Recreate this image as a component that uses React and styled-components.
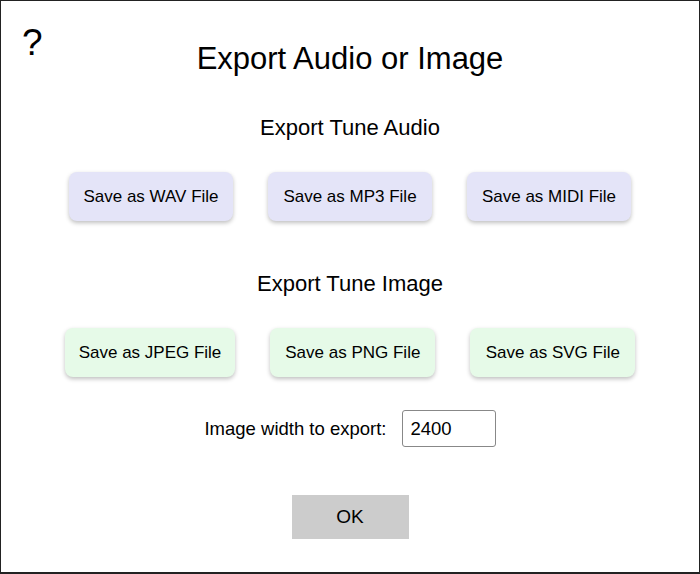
import React, { useState } from "react";
import styled, { createGlobalStyle } from "styled-components";

const GlobalStyle = createGlobalStyle`
  * {
    box-sizing: border-box;
  }
  body {
    margin: 0;
    padding: 0;
    background: #fff;
    font-family: "Liberation Sans", Arial, sans-serif;
  }
`;

const Dialog = styled.div`
  position: relative;
  width: 700px;
  height: 574px;
  border: 1px solid #222;
  border-bottom-width: 2px;
  background: #fff;
  display: flex;
  flex-direction: column;
  align-items: center;
  padding-top: 38px;
  color: #000;
`;

const HelpMark = styled.div`
  position: absolute;
  left: 21px;
  top: 23px;
  font-size: 37px;
  line-height: 1;
  cursor: pointer;
`;

const Title = styled.h1`
  margin: 0;
  font-size: 31px;
  font-weight: normal;
  line-height: 40px;
`;

const Section = styled.h2`
  margin: ${(p) => p.$top}px 0 0;
  font-size: 22px;
  font-weight: normal;
  line-height: 24px;
`;

const ButtonRow = styled.div`
  display: flex;
  justify-content: center;
  gap: 35px;
  margin-top: 32px;
`;

const SaveButton = styled.button`
  font-family: "Liberation Sans", Arial, sans-serif;
  font-size: 17px;
  color: #000;
  height: 49px;
  padding: 0 14px;
  min-width: ${(p) => p.$min}px;
  border: none;
  border-radius: 8px;
  background: ${(p) => (p.$kind === "audio" ? "#e4e4f8" : "#e6fae8")};
  box-shadow: 0 2px 4px rgba(0, 0, 0, 0.25);
  cursor: pointer;
`;

const WidthRow = styled.div`
  display: flex;
  align-items: center;
  gap: 15px;
  margin-top: 33px;
  font-size: 18.5px;
`;

const WidthInput = styled.input`
  width: 94px;
  height: 37px;
  border: 1px solid #888;
  border-radius: 3px;
  padding: 0 8px;
  font-family: "Liberation Sans", Arial, sans-serif;
  font-size: 18.5px;
  color: #000;
  outline: none;
`;

const OkButton = styled.button`
  margin-top: 48px;
  width: 117px;
  height: 44px;
  border: none;
  background: #cccccc;
  font-family: "Liberation Sans", Arial, sans-serif;
  font-size: 19px;
  color: #000;
  cursor: pointer;
`;

const audioButtons = ["Save as WAV File", "Save as MP3 File", "Save as MIDI File"];
const imageButtons = ["Save as JPEG File", "Save as PNG File", "Save as SVG File"];

export default function App() {
  const [width, setWidth] = useState("2400");

  return (
    <>
      <GlobalStyle />
      <Dialog>
        <HelpMark>?</HelpMark>
        <Title>Export Audio or Image</Title>
        <Section $top={37}>Export Tune Audio</Section>
        <ButtonRow>
          {audioButtons.map((b) => (
            <SaveButton key={b} $kind="audio" $min={164}>
              {b}
            </SaveButton>
          ))}
        </ButtonRow>
        <Section $top={51}>Export Tune Image</Section>
        <ButtonRow>
          {imageButtons.map((b) => (
            <SaveButton key={b} $kind="image" $min={165}>
              {b}
            </SaveButton>
          ))}
        </ButtonRow>
        <WidthRow>
          <span>Image width to export:</span>
          <WidthInput value={width} onChange={(e) => setWidth(e.target.value)} />
        </WidthRow>
        <OkButton>OK</OkButton>
      </Dialog>
    </>
  );
}
